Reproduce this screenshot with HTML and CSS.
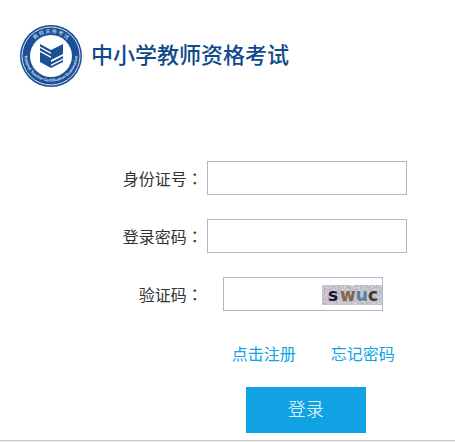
FILE: index.html
```html
<!DOCTYPE html>
<html lang="zh-CN">
<head>
  <meta charset="UTF-8" />
  <meta name="viewport" content="width=device-width, initial-scale=1.0"/>
  <title>中小学教师资格考试</title>
  <link rel="stylesheet" href="styles.css">
</head>
<body>
  <header class="header">
    <svg class="logo" viewBox="0 0 62 62" aria-hidden="true">
      <defs>
        <path id="arc-top" d="M8 31a23 23 0 0 1 46 0"/>
        <path id="arc-bottom" d="M5 25a26.500 26.500 0 1 0 52 0"/>
      </defs>
      <circle cx="31" cy="31" r="31" fill="#1c4f96"/>
      <circle cx="31" cy="31" r="29" fill="none" stroke="#d5e0ee" stroke-width="1"/>
      <circle cx="31" cy="31" r="21" fill="#fff"/>
      <text class="logo-cn"><textPath href="#arc-top" startOffset="50%">教 师 资 格 考 试</textPath></text>
      <text class="logo-en"><textPath href="#arc-bottom" startOffset="50%">National Teacher Certification Examination</textPath></text>
      <g fill="#1c4f96">
        <path d="M20 19l11 6v2.500l-11-6zM20 23l11 6v2.500l-11-6zM20 27l11 6v10l-11-6z"/>
        <path d="M43 19l-12 6v10l12-6zM43 31l-12 6v2.500l12-6zM43 35l-12 6v2l12-6z"/>
      </g>
    </svg>
    <h1 class="title">中小学教师资格考试</h1>
  </header>

  <form class="login">
    <label for="idcard">身份证号<span class="colon" lang="zh-TW">：</span></label>
    <input type="text" id="idcard" name="idcard">

    <label for="password">登录密码<span class="colon" lang="zh-TW">：</span></label>
    <input type="password" id="password" name="password">

    <label for="code">验证码<span class="colon" lang="zh-TW">：</span></label>
    <div class="code">
      <input type="text" id="code" name="code">
      <svg class="captcha" viewBox="0 0 60 20">
        <filter id="noise" x="0" y="0" width="100%" height="100%">
          <feTurbulence type="fractalNoise" baseFrequency="0.5" numOctaves="2" seed="4"/>
          <feColorMatrix values="0.8 0 0 0 0.18  0 0.8 0 0 0.14  0 0 0.8 0 0.2  0 0 0 0 1"/>
        </filter>
        <rect width="60" height="20" filter="url(#noise)"/>
        <text y="16"><tspan x="6" fill="#16163c">s</tspan><tspan x="18" fill="#7d6848">w</tspan><tspan fill="#55809a">u</tspan><tspan x="46" fill="#37402f">c</tspan></text>
      </svg>
    </div>

    <div class="links">
      <a href="#">点击注册</a>
      <a href="#">忘记密码</a>
    </div>
    <button type="submit">登录</button>
  </form>
  <footer class="footer"></footer>
</body>
</html>
```
FILE: styles.css
```css
body {
  margin: 0;
  font-family: "Noto Sans CJK SC", sans-serif;
  font-size: 16px;
  color: #333;
  background: #fff;
}
.header {
  display: flex;
  align-items: center;
  gap: 9px;
  padding: 25px 20px 0;
}
.logo {
  width: 62px;
  height: 62px;
}
.logo text {
  fill: #dfe8f3;
  text-anchor: middle;
}
.logo-cn {
  font-size: 5px;
}
.logo-en {
  font-family: "Liberation Sans", sans-serif;
  font-size: 4px;
  font-weight: bold;
}
.title {
  margin: 0;
  padding-bottom: 6px;
  font-size: 22px;
  line-height: 32px;
  font-weight: 500;
  color: #104a8c;
}
.login {
  display: grid;
  grid-template-columns: 80px 200px;
  column-gap: 4px;
  row-gap: 24px;
  align-items: center;
  margin-left: 27%;
  padding: 74px 0 7px;
}
label {
  text-align: right;
  line-height: 24px;
  white-space: nowrap;
}
.colon {
  font-family: "Noto Sans CJK TC", sans-serif;
}
input {
  box-sizing: border-box;
  width: 100%;
  height: 34px;
  padding: 0 8px;
  border: 1px solid #a5bbd0;
  font-size: 16px;
  outline: none;
}
.code {
  position: relative;
  width: 160px;
  margin-left: 16px;
}
.code input {
  display: block;
  padding-right: 64px;
}
.captcha {
  position: absolute;
  top: 8px;
  right: 1px;
  width: 60px;
  height: 20px;
}
.captcha text {
  font-family: "DejaVu Sans", sans-serif;
  font-size: 17px;
  font-weight: bold;
}
.links {
  grid-column: 2;
  display: flex;
  gap: 35px;
  padding-left: 25px;
  line-height: 36px;
}
a {
  color: #10a2e3;
  text-decoration: none;
}
button {
  grid-column: 2;
  width: 120px;
  height: 46px;
  margin-left: 39px;
  margin-top: -8px;
  padding: 0 0 4px;
  border: none;
  background: #10a2e3;
  color: #fff;
  font-family: inherit;
  font-size: 18px;
  font-weight: 300;
  cursor: pointer;
}
.footer {
  height: 1px;
  border-top: 1px solid #c8c8c8;
  background: #f3f3f3;
}
```
